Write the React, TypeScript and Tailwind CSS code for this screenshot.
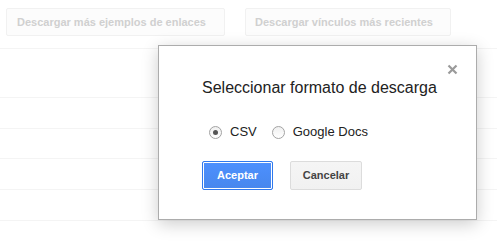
import React from "react";

function Radio({ checked }: { checked?: boolean }) {
  return (
    <span className="flex h-[13px] w-[13px] shrink-0 items-center justify-center rounded-full border border-[#a3a3a3] bg-gradient-to-b from-[#f0f0f0] to-[#ffffff]">
      {checked ? <span className="block h-[5px] w-[5px] rounded-full bg-[#555555]" /> : null}
    </span>
  );
}

export default function App() {
  const font = { fontFamily: '"Liberation Sans", Arial, sans-serif' };
  return (
    <div className="relative h-[244px] w-[497px] overflow-hidden bg-white" style={font}>
      <div className="flex h-[49px] items-start gap-[20px] border-b border-[#f4f4f4] pl-[6px] pt-[8px]">
        <div className="flex h-[28px] w-[219px] items-center rounded-[2px] border border-[#f1f1f1] bg-[#fcfcfc] pl-[10px] text-[11px] font-bold text-[#d0d0d0]">
          Descargar más ejemplos de enlaces
        </div>
        <div className="flex h-[28px] w-[206px] items-center rounded-[2px] border border-[#f1f1f1] bg-[#fcfcfc] pl-[9px] text-[11px] font-bold text-[#d0d0d0]">
          Descargar vínculos más recientes
        </div>
      </div>
      <div className="h-[49px] border-b border-[#f4f4f4]" />
      <div className="h-[31px] border-b border-[#f4f4f4]" />
      <div className="h-[30px] border-b border-[#f4f4f4]" />
      <div className="h-[31px] border-b border-[#f4f4f4]" />
      <div className="h-[31px] border-b border-[#f4f4f4]" />

      <div className="absolute left-[158px] top-[45px] h-[175px] w-[319px] border border-[#acacac] bg-white pl-[43px] pt-[33px] shadow-[0_4px_16px_rgba(0,0,0,0.2)]">
        <button className="absolute right-[18px] top-[18px] flex h-[11px] w-[11px] items-center justify-center">
          <svg width="11" height="11" viewBox="0 0 11 11">
            <path d="M1.5 1.5 L9.5 9.5 M9.5 1.5 L1.5 9.5" stroke="#9a9a9a" strokeWidth="2.2" strokeLinecap="butt" />
          </svg>
        </button>
        <div className="h-[18px] text-[16px] leading-[18px] text-[#222222]">Seleccionar formato de descarga</div>
        <div className="ml-[7px] mt-[27px] flex h-[16px] items-center text-[13px] text-[#222222]">
          <Radio checked />
          <span className="ml-[8px]">CSV</span>
          <span className="ml-[15px]">
            <Radio />
          </span>
          <span className="ml-[8px]">Google Docs</span>
        </div>
        <div className="mt-[21px] flex gap-[17px]">
          <button className="flex h-[29px] w-[71px] items-center justify-center rounded-[2px] border border-[#3079ed] bg-gradient-to-b from-[#4d90fe] to-[#4787ed] text-[11px] font-bold text-white shadow-[inset_0_0_0_1px_#ffffff]">
            Aceptar
          </button>
          <button className="flex h-[29px] w-[72px] items-center justify-center rounded-[2px] border border-[#dcdcdc] bg-gradient-to-b from-[#f5f5f5] to-[#f1f1f1] text-[11px] font-bold text-[#444444]">
            Cancelar
          </button>
        </div>
      </div>
    </div>
  );
}
